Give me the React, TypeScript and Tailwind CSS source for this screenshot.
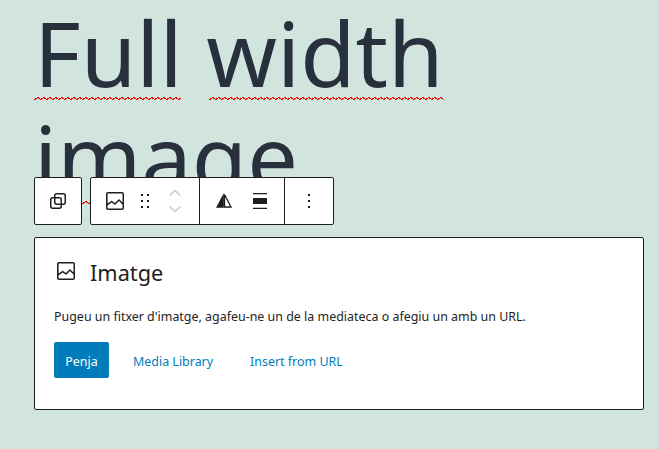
const wavePixels = (w: number) => {
  let d = "";
  const cols = [[2], [1, 2], [1], [0], [0, 1], [1]];
  for (let x = 0; x < w; x++) for (const y of cols[x % 6]) d += `M${x} ${y}h1v1h-1z`;
  return d;
};

function Word({ children, w, offset }: { children: string; w: number; offset: string }) {
  return (
    <span className="relative inline-block">
      {children}
      <svg className={`absolute top-[97px] ${offset}`} width={w} height="3" viewBox={`0 0 ${w} 3`} fill="#f00" shapeRendering="crispEdges">
        <path d={wavePixels(w)} />
      </svg>
    </span>
  );
}

const ImageIcon = () => (
  <svg className="shrink-0" width="24" height="24" viewBox="0 0 24 24" fill="#1e1e1e">
    <path d="M19 3H5c-1.100 0-2 .9-2 2v14c0 1.100.9 2 2 2h14c1.100 0 2-.9 2-2V5c0-1.100-.9-2-2-2zM5 4.500h14c.3 0 .5.2.5.5v8.400l-3-2.900c-.3-.3-.8-.3-1 0L11.900 14 9 12c-.3-.2-.6-.2-.8 0l-3.600 2.600V5c-.1-.3.1-.5.4-.5zm14 15H5c-.3 0-.5-.2-.5-.5v-2.400l4.100-3 3 1.900c.3.2.7.2.9-.1L16 12l3.500 3.400V19c0 .3-.2.5-.5.5z" />
  </svg>
);

export default function App() {
  return (
    <div className="relative h-[449px] w-[659px] overflow-hidden bg-[#d1e4dd] font-['Noto_Sans','Open_Sans',sans-serif]">
      <div className="px-[34px]">
        <h1 className="h-[237px] text-[90px] font-normal leading-[104px] text-[#28303d]">
          <Word w={147} offset="left-0">Full</Word> <Word w={235} offset="left-[3px]">width</Word> <Word w={262} offset="left-0">image</Word>
        </h1>
        <div className="h-[173px] w-[610px] rounded-[2px] border border-[#1e1e1e] bg-white px-[19px] pt-[19px]">
          <div className="flex h-[32px] items-center gap-[12px]">
            <span className="mb-[4px]">
              <ImageIcon />
            </span>
            <span className="text-[21.7px] leading-[32px] text-[#1e1e1e]">Imatge</span>
          </div>
          <p className="mt-[19px] text-[12.45px] leading-[18px] text-[#1e1e1e]">
            Pugeu un fitxer d'imatge, agafeu-ne un de la mediateca o afegiu un amb un URL.
          </p>
          <div className="mt-[16px] flex items-center text-[12.45px] text-[#007cba]">
            <button className="h-[36px] w-[55px] rounded-[2px] bg-[#007cba] pt-[4px] text-white">Penja</button>
            <span className="ml-[24px] pt-[4px]">Media Library</span>
            <span className="ml-[37px] pt-[4px]">Insert from URL</span>
          </div>
        </div>
      </div>

      <div className="absolute left-[34px] top-[177px] flex gap-[8px]">
        <div className="flex h-[48px] w-[48px] items-center justify-center rounded-[2px] border border-[#1e1e1e] bg-white">
          <svg width="24" height="24" viewBox="0 0 24 24" fill="none" stroke="#1e1e1e" strokeWidth="1.500">
            <rect x="4.750" y="8.750" width="10.500" height="10.500" rx="2" />
            <rect x="8.750" y="4.750" width="10.500" height="10.500" rx="2" />
          </svg>
        </div>
        <div className="flex h-[48px] w-[244px] rounded-[2px] border border-[#1e1e1e] bg-white">
          <div className="flex h-full w-[109px] items-center border-r border-[#1e1e1e] pl-[12px]">
            <ImageIcon />
            <svg className="ml-[6px] shrink-0" width="24" height="24" viewBox="0 0 24 24" fill="#1e1e1e">
              <path d="M8 5h2v2H8zM14 5h2v2h-2zM8 11h2v2H8zM14 11h2v2h-2zM8 17h2v2H8zM14 17h2v2h-2z" />
            </svg>
            <svg className="ml-[11px] shrink-0" width="14" height="26" viewBox="0 0 14 26" fill="none" stroke="#c8c8c8" strokeWidth="1.500">
              <path d="M1.500 7.500 7 2.500l5.500 5M1.500 18.500 7 23.500l5.500-5" />
            </svg>
          </div>
          <div className="flex h-full w-[85px] items-center gap-[12px] border-r border-[#1e1e1e] pl-[12px]">
            <svg width="24" height="24" viewBox="0 0 24 24" fill="none">
              <path d="M11.800 4 4 18.750h7.800z" fill="#1e1e1e" />
              <path d="M12.500 5.500V18h6.500z" stroke="#1e1e1e" strokeWidth="1.300" />
            </svg>
            <svg width="24" height="24" viewBox="0 0 24 24" fill="#1e1e1e">
              <path d="M5 4h14v1.200H5zM5 9h14v6H5zM5 18.800h14V20H5z" />
            </svg>
          </div>
          <div className="flex h-full flex-1 items-center justify-center">
            <svg width="24" height="24" viewBox="0 0 24 24" fill="#1e1e1e">
              <path d="M13 19h-2v-2h2v2zm0-6h-2v-2h2v2zm0-6h-2V5h2v2z" />
            </svg>
          </div>
        </div>
      </div>
    </div>
  );
}
